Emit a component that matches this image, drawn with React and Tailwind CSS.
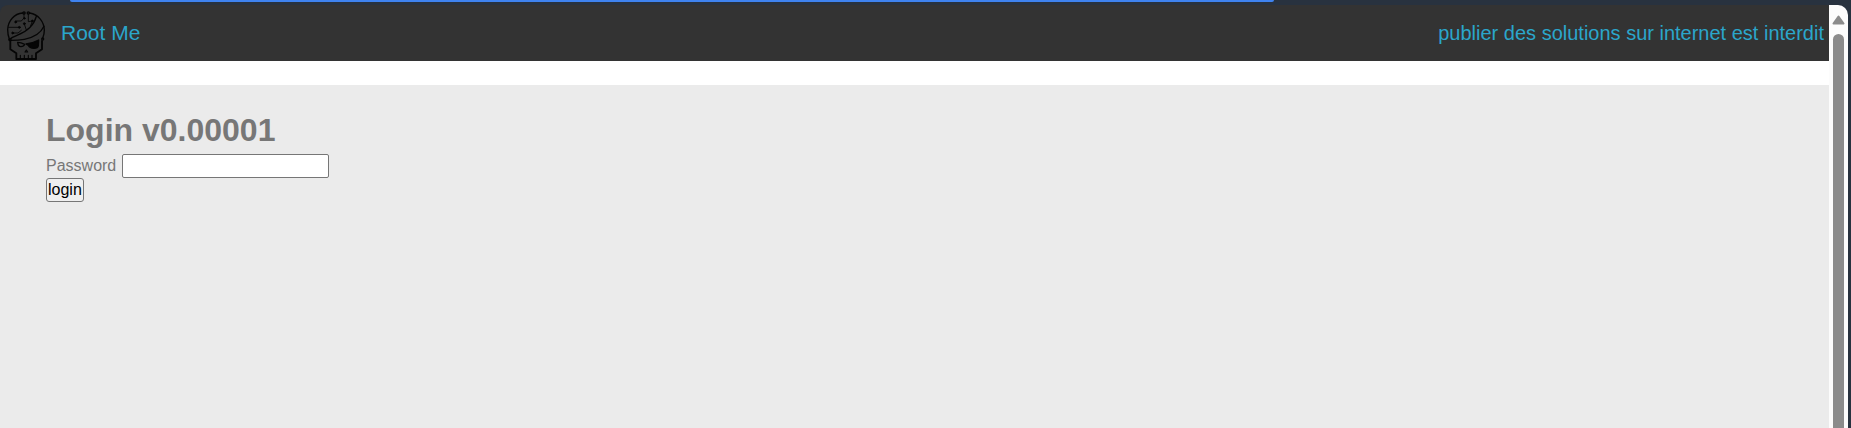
function SkullLogo() {
  return (
    <svg
      viewBox="20 32 114 147"
      className="mt-1 h-[49px] w-[38px] shrink-0"
      fill="none"
      stroke="#050505"
      strokeWidth="4"
      strokeLinejoin="round"
      strokeLinecap="round"
      aria-hidden="true"
    >
      <path d="M67 38C42 40 23 61 22 88c0 11 2 20 5 28M88 38c26 4 43 26 44 51 0 10-2 18-5 25" />
      <circle cx="71" cy="38" r="3.4" />
      <circle cx="84" cy="38" r="3.4" />
      <path d="M108 48C100 79 76 95 50 105c-11 4-18 8-24 13" />
      <path d="M131 78C120 101 100 112 72 117c-18 3-31 3-41 3" />
      <circle cx="29" cy="118" r="3" />
      <circle cx="127" cy="116" r="3" />
      <path d="M30 122v25l18 12v17h59v-17l18-12v-25" strokeWidth="5.5" />
      <path d="M60 165v9M72 165v9M84 165v9M95 165v9" strokeWidth="3.4" />
      <path d="M74 155l4-6 4 6z" strokeWidth="3.4" />
      <path d="M52 126c7 0 14 2 21 6-2 5-5 7-11 7-5 0-9-4-10-13z" />
      <path d="M77 131c14-2 27-6 38-12l-1 17c-1 6-6 8-13 8-8 0-15-3-17-9z" fill="#050505" />
      <g strokeWidth="2.6">
        <path d="M71 42v11l-8 9H47M84 42v22l12-2M25 81h30M38 98h15l10-8M72 71l6 18M96 62l-5 14" />
        <g fill="#050505">
          <circle cx="46" cy="65" r="2.8" />
          <circle cx="57" cy="81" r="2.8" />
          <circle cx="37" cy="98" r="2.8" />
          <circle cx="72" cy="70" r="2.8" />
          <circle cx="96" cy="62" r="2.8" />
          <circle cx="72" cy="54" r="2.4" />
        </g>
      </g>
    </svg>
  );
}

function ScrollRail() {
  return (
    <div className="flex w-[19px] shrink-0 flex-col items-center rounded-tr-[10px] bg-[#fcfcfc] pt-[10px]" aria-hidden="true">
      <svg viewBox="0 0 13 10" className="h-[10px] w-[13px]">
        <path d="M6.5 1.5L11.5 8.5H1.5z" fill="#8b8b8b" stroke="#8b8b8b" strokeWidth="2" strokeLinejoin="round" />
      </svg>
      <div className="mt-[9px] w-[11px] grow rounded-t-full bg-[#8b8b8b]" />
    </div>
  );
}

export default function App() {
  return (
    <div className="flex h-screen flex-col overflow-hidden bg-[#28323f] font-['Liberation_Sans',Arial,sans-serif]">
      <div className="h-[5px] shrink-0 pr-[577px] pl-[70px]">
        <div className="h-[2px] rounded-b-full bg-[#3f83f0]" />
      </div>
      <div className="flex grow pr-[3px]">
        <div className="flex grow flex-col">
          <nav className="flex h-14 shrink-0 items-center rounded-tl-lg bg-[#333333] pr-[5px] pl-[7px] text-[#2ba6cb]">
            <SkullLogo />
            <a href="#" className="ml-4 text-[21px]">Root Me</a>
            <a href="#" className="ml-auto text-[20px]">publier des solutions sur internet est interdit</a>
          </nav>
          <main className="grow border-t-24 border-white bg-[#ebebeb] px-[46px] pt-6 text-[#777777]">
            <h1 className="mb-0.5 text-[32px] leading-[43px] font-bold">Login v0.00001</h1>
            <form onSubmit={(event) => event.preventDefault()}>
              <div className="flex h-6 items-center gap-1">
                <label htmlFor="password" className="w-[72px] text-base leading-6">Password</label>
                <input
                  id="password"
                  type="password"
                  className="h-6 w-[207px] rounded-[2px] border border-[#767676] bg-white px-1 text-base text-black"
                />
              </div>
              <button
                type="submit"
                className="flex h-6 items-center rounded-[3px] border border-[#767676] bg-[#efefef] px-px text-base text-black"
              >
                login
              </button>
            </form>
          </main>
        </div>
        <ScrollRail />
      </div>
    </div>
  );
}
